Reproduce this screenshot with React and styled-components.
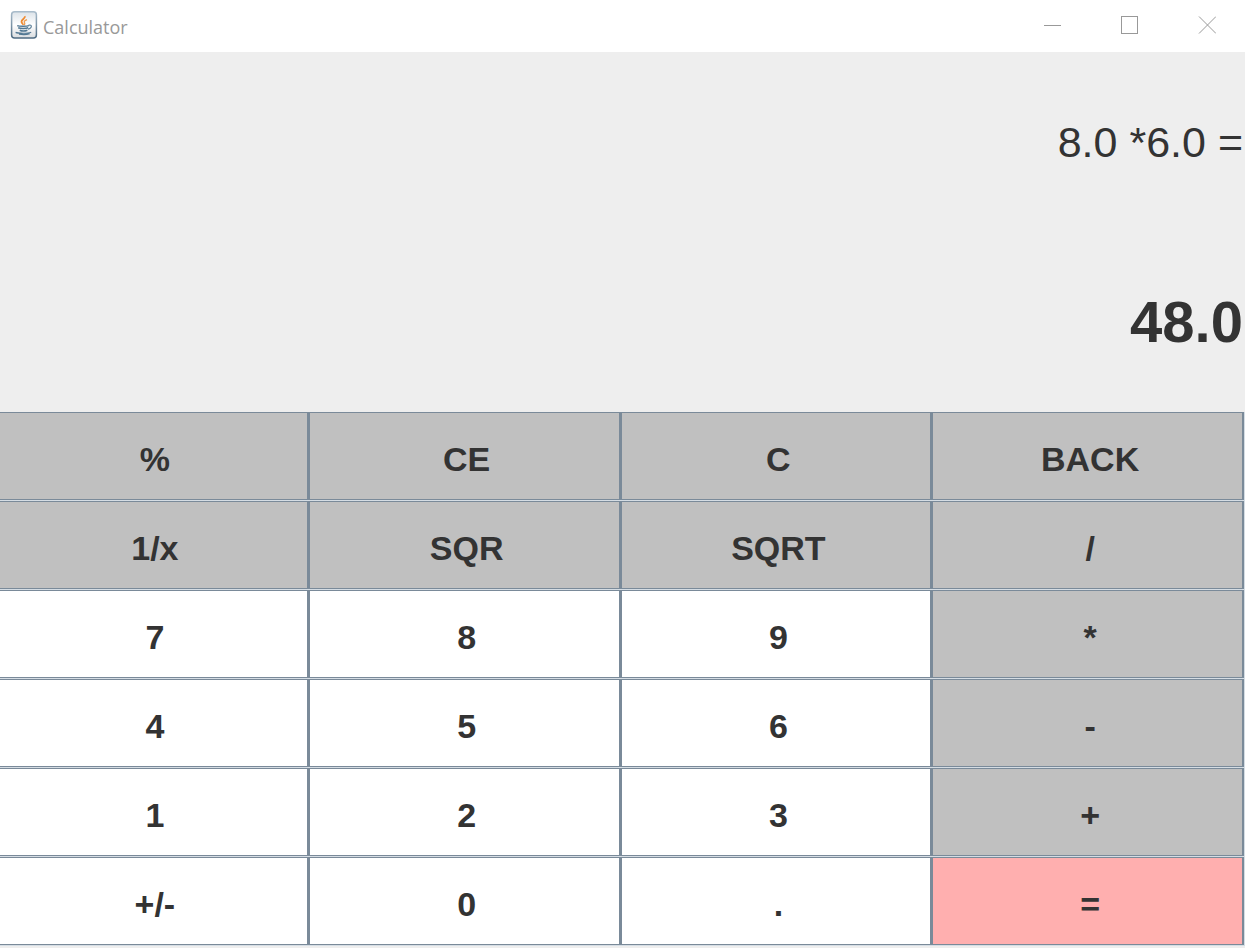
import React from "react";
import styled, { createGlobalStyle } from "styled-components";

const GlobalStyle = createGlobalStyle`
  * { box-sizing: border-box; }
  html, body, #root { height: 100%; }
  body { margin: 0; background: #eeeeee; }
`;

const Window = styled.main`
  display: flex;
  flex-direction: column;
  min-height: 100%;
  padding-bottom: 2px;
  background: #eeeeee;
  color: #333333;
  font-family: "Liberation Sans", Arial, sans-serif;
`;

const TitleBar = styled.header`
  display: flex;
  align-items: center;
  height: 52px;
  padding: 0 0 2px 10px;
  background: #ffffff;
`;

const Title = styled.h1`
  flex: 1;
  margin: 0 0 0 5px;
  padding-top: 4px;
  font: 400 18px/24px "Open Sans", "Noto Sans", sans-serif;
  color: #999999;
`;

const WindowButton = styled.button`
  display: flex;
  align-items: center;
  justify-content: center;
  width: 77px;
  height: 50px;
  padding: 0;
  border: 0;
  background: transparent;
  color: #999999;
`;

const Display = styled.section`
  display: grid;
  grid-template-rows: 1fr 1fr;
  flex: 1;
  min-height: 240px;
`;

const Readout = styled.output`
  display: flex;
  align-items: center;
  justify-content: flex-end;
  padding-right: 2px;
  white-space: pre;
  font-size: ${(p) => (p.$result ? 58 : 43)}px;
  font-weight: ${(p) => (p.$result ? 700 : 400)};
  line-height: 60px;
`;

const Keypad = styled.section`
  display: grid;
  grid-template-columns: repeat(4, 1fr);
  grid-auto-rows: 88px;
  row-gap: 1px;
  padding: 0 1px 1px 0;
  margin-left: -3px;
  background: #d5dde4;
`;

const keyColors = {
  digit: "#ffffff",
  operator: "#c0c0c0",
  equals: "#ffafaf",
};

const Key = styled.button`
  padding: 5px 0 0 5px;
  border: solid #7a8a99;
  border-width: 1px 2px 1px 1px;
  border-radius: 0;
  background: ${(p) => keyColors[p.$kind]};
  color: #333333;
  font: 700 34px/40px "Liberation Sans", Arial, sans-serif;
`;

const keys = [
  ["%", "operator"], ["CE", "operator"], ["C", "operator"], ["BACK", "operator"],
  ["1/x", "operator"], ["SQR", "operator"], ["SQRT", "operator"], ["/", "operator"],
  ["7", "digit"], ["8", "digit"], ["9", "digit"], ["*", "operator"],
  ["4", "digit"], ["5", "digit"], ["6", "digit"], ["-", "operator"],
  ["1", "digit"], ["2", "digit"], ["3", "digit"], ["+", "operator"],
  ["+/-", "digit"], ["0", "digit"], [".", "digit"], ["=", "equals"],
];

function JavaIcon() {
  return (
    <svg width="28" height="28" viewBox="0 0 28 28" fill="none" aria-hidden="true">
      <defs>
        <linearGradient id="tile" x1="0" y1="0" x2="0" y2="1">
          <stop offset="0" stopColor="#dce3e9" />
          <stop offset="0.5" stopColor="#ffffff" />
          <stop offset="1" stopColor="#d9dcdf" />
        </linearGradient>
        <linearGradient id="edge" x1="0" y1="0" x2="0" y2="1">
          <stop offset="0" stopColor="#a9bccb" />
          <stop offset="1" stopColor="#4f6b82" />
        </linearGradient>
      </defs>
      <rect x="1.6" y="0.8" width="24.8" height="26.2" rx="3" fill="url(#tile)" stroke="url(#edge)" strokeWidth="1.5" />
      <path d="M14.8 5.2c1 2.2-3.5 3.2-3.3 5.6 0 1.2 1.3 2 1.9 3.1" stroke="#ee8a32" strokeWidth="1.8" />
      <path d="M17 8.6c-2.4.9-3.5 1.9-2.4 3.2.5.8.2 1.5-.5 2.2" stroke="#ee9c50" strokeWidth="1.3" />
      <path d="M7.2 14.6c2 .9 9.5.9 11.800 0M8.2 16.8c2.2.9 8 .8 10 0M9.7 19.2c1.8.8 5.9.7 7.700 0" stroke="#527893" strokeWidth="1.5" />
      <path d="M18.6 14.2c3.8-.8 3.8 3-.7 4" stroke="#64869e" strokeWidth="1.2" />
      <path d="M5.6 21.4c2.4 1.1 12.4 1.2 15.6-.2M9 23.2c4 .7 7.8.5 10.8-.4" stroke="#527893" strokeWidth="1.2" />
    </svg>
  );
}

export default function App() {
  return (
    <Window>
      <GlobalStyle />
      <TitleBar>
        <JavaIcon />
        <Title>Calculator</Title>
        <WindowButton aria-label="Minimize">
          <svg width="18" height="18" stroke="currentColor" aria-hidden="true">
            <path d="M0 9.5h17" />
          </svg>
        </WindowButton>
        <WindowButton aria-label="Maximize">
          <svg width="18" height="18" fill="none" stroke="currentColor" aria-hidden="true">
            <rect x="0.5" y="0.5" width="16" height="17" />
          </svg>
        </WindowButton>
        <WindowButton aria-label="Close">
          <svg width="18" height="18" stroke="currentColor" aria-hidden="true">
            <path d="M1 .5l17 17M18 .5l-17 17" />
          </svg>
        </WindowButton>
      </TitleBar>
      <Display>
        <Readout>8.0 *6.0 =</Readout>
        <Readout $result>48.0</Readout>
      </Display>
      <Keypad>
        {keys.map(([label, kind]) => (
          <Key key={label} type="button" $kind={kind}>{label}</Key>
        ))}
      </Keypad>
    </Window>
  );
}
